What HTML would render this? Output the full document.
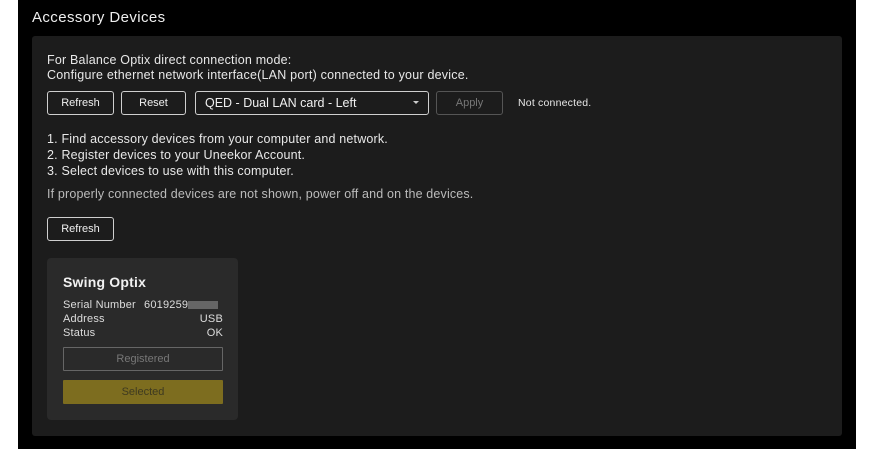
<!DOCTYPE html>
<html><head><meta charset="utf-8"><style>
*{margin:0;padding:0;box-sizing:border-box}
body{width:878px;height:460px;background:#fff;font-family:"Liberation Sans",sans-serif;position:relative;overflow:hidden;color:#e6e6e6}
.outer{position:absolute;left:18px;top:0;width:838px;height:449px;background:#000}
.title{position:absolute;left:32px;top:9px;font-size:15px;color:#eee;letter-spacing:0.4px}
.panel{position:absolute;left:32px;top:36px;width:810px;height:400px;background:#1c1c1c;border-radius:3px}
.t{position:absolute;font-size:12.5px;color:#e8e8e8;white-space:nowrap;letter-spacing:0.2px}
.btn{position:absolute;height:24px;border:1px solid #cfcfcf;border-radius:3px;font-size:11px;color:#f0f0f0;display:flex;align-items:center;justify-content:center}
.card{position:absolute;left:47px;top:258px;width:191px;height:162px;background:#2a2a2a;border-radius:4px}
.c{position:absolute;font-size:11px;color:#ddd;white-space:nowrap;letter-spacing:0.2px}
</style></head><body>
<div class="outer"></div>
<div class="title">Accessory Devices</div>
<div class="panel"></div>
<div class="t" style="left:47px;top:53px">For Balance Optix direct connection mode:</div>
<div class="t" style="left:47px;top:68px;letter-spacing:0.22px">Configure ethernet network interface(LAN port) connected to your device.</div>
<div class="btn" style="left:47px;top:91px;width:67px">Refresh</div>
<div class="btn" style="left:121px;top:91px;width:65px">Reset</div>
<div class="btn" style="left:195px;top:91px;width:234px;justify-content:flex-start;padding-left:9px;font-size:12.5px">QED - Dual LAN card - Left<span style="position:absolute;right:9px;top:9px;width:0;height:0;border-left:3px solid transparent;border-right:3px solid transparent;border-top:3px solid #ccc"></span></div>
<div class="btn" style="left:436px;top:91px;width:67px;border-color:#555;color:#777">Apply</div>
<div class="t" style="left:518px;top:97px;font-size:10.5px">Not connected.</div>
<div class="t" style="left:47px;top:132px;letter-spacing:0.18px">1. Find accessory devices from your computer and network.</div>
<div class="t" style="left:47px;top:148px;letter-spacing:0.18px">2. Register devices to your Uneekor Account.</div>
<div class="t" style="left:47px;top:164px;letter-spacing:0.18px">3. Select devices to use with this computer.</div>
<div class="t" style="left:47px;top:187px;color:#bbb;letter-spacing:0.16px">If properly connected devices are not shown, power off and on the devices.</div>
<div class="btn" style="left:47px;top:217px;width:67px">Refresh</div>
<div class="card"></div>
<div class="c" style="left:63px;top:274px;font-size:14px;font-weight:bold;color:#f2f2f2">Swing Optix</div>
<div class="c" style="left:63px;top:299px">Serial Number</div>
<div class="c" style="left:144px;top:299px">6019259<span style="display:inline-block;width:30px;height:8px;background:#666;vertical-align:middle"></span></div>
<div class="c" style="left:63px;top:313px">Address</div><div class="c" style="right:655px;top:313px">USB</div>
<div class="c" style="left:63px;top:327px">Status</div><div class="c" style="right:655px;top:327px">OK</div>
<div class="btn" style="left:63px;top:347px;width:160px;border-color:#666;color:#777;border-radius:1px">Registered</div>
<div class="btn" style="left:63px;top:380px;width:160px;border:none;background:#7d6d1f;color:#3e3a20;border-radius:1px">Selected</div>
</body></html>
